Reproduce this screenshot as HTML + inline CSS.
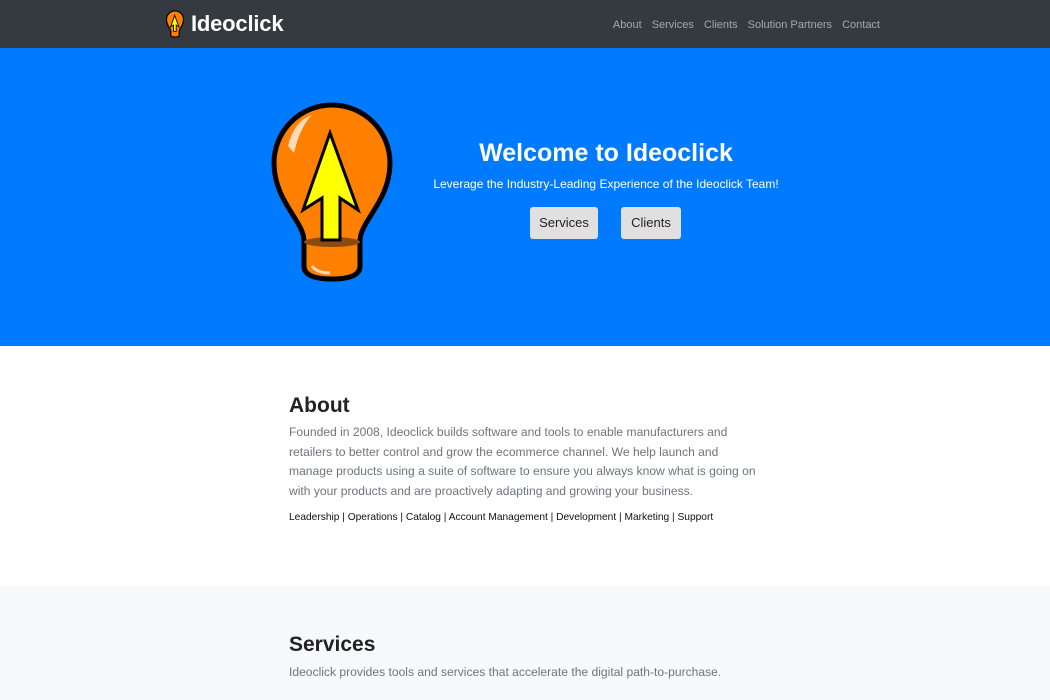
<!DOCTYPE html>
<html><head><meta charset="utf-8"><style>
*{margin:0;padding:0;box-sizing:border-box}
body{width:1050px;height:700px;overflow:hidden;font-family:"Liberation Sans",sans-serif;background:#fff}
nav{height:48px;background:#343a40;position:relative}
.brand{position:absolute;left:166px;top:8px;display:flex;align-items:center}
.brand span{color:#fff;font-weight:bold;font-size:22px;margin-left:7px;letter-spacing:-0.2px}
.links{position:absolute;right:170px;top:19px;font-size:11px;color:rgba(255,255,255,.55)}
.links span{margin-left:7px}
.hero{height:298px;background:#007bff;position:relative}
.bulb{position:absolute;left:269px;top:50px}
.hero h1{position:absolute;left:430px;width:352px;text-align:center;top:91px;color:#fff;font-size:25px;font-weight:bold}
.hero p{position:absolute;left:420px;width:372px;text-align:center;top:129px;color:#fff;font-size:12px}
.btn{position:absolute;top:159px;height:32px;background:#e0e0e0;border-radius:3px;font-size:13px;color:#222;text-align:center;line-height:32px}
.about{height:239px;position:relative}
.about h2,.svc h2{position:absolute;left:289px;font-size:21px;font-weight:bold;color:#222}
.txt{position:absolute;left:289px;color:#6c757d;font-size:12.1px;line-height:19.6px;width:472px}
.svc{height:115px;background:#f8f9fa;position:relative}
</style></head><body>
<nav>
<div class="brand">
<svg width="18" height="32" viewBox="0 0 120 180"><path d="M32,165 L32,140 C32,120 3,100 3,60 A57,57 0 0 1 117,60 C117,100 88,120 88,140 L88,165 Q88,177 60,177 Q32,177 32,165 Z" fill="#ff8000" stroke="#000" stroke-width="8"/><path d="M58,32 L31,109 L50,97 L50,139 L68,139 L68,97 L86,109 Z" fill="#ff0" stroke="#000" stroke-width="6"/></svg>
<span>Ideoclick</span></div>
<div class="links"><span>About</span> <span>Services</span> <span>Clients</span> <span>Solution Partners</span> <span>Contact</span></div>
</nav>
<div class="hero">
<svg class="bulb" width="126" height="186" viewBox="-3 -3 126 186"><path d="M32,165 L32,140 C32,120 2,100 2,62 A58,58 0 0 1 118,62 C118,100 88,120 88,140 L88,165 Q88,178 60,178 Q32,178 32,165 Z" fill="#ff8000" stroke="#000" stroke-width="5"/>
<ellipse cx="60" cy="141" rx="28" ry="5" fill="#8a4a10"/>
<path d="M16,45 Q22,20 40,14 Q28,26 22,52 Z" fill="#ffd9b8"/>
<path d="M40,165 Q45,172 58,172" stroke="#ffd9b8" stroke-width="3" fill="none"/>
<path d="M58,32 L31,109 L50,97 L50,139 L68,139 L68,97 L86,109 Z" fill="#ff0" stroke="#000" stroke-width="3"/></svg>
<h1>Welcome to Ideoclick</h1>
<p>Leverage the Industry-Leading Experience of the Ideoclick Team!</p>
<div class="btn" style="left:530px;width:68px">Services</div>
<div class="btn" style="left:621px;width:60px">Clients</div>
</div>
<div class="about">
<h2 style="top:48px">About</h2>
<div class="txt" style="top:77px">Founded in 2008, Ideoclick builds software and tools to enable manufacturers and retailers to better control and grow the ecommerce channel. We help launch and manage products using a suite of software to ensure you always know what is going on with your products and are proactively adapting and growing your business.</div>
<div class="txt" style="top:165px;color:#111;font-size:10.2px;line-height:14px;width:500px">Leadership | Operations | Catalog | Account Management | Development | Marketing | Support</div>
</div>
<div class="svc">
<h2 style="top:48px">Services</h2>
<div class="txt" style="top:78px;width:500px">Ideoclick provides tools and services that accelerate the digital path-to-purchase.</div>
</div>
</body></html>
